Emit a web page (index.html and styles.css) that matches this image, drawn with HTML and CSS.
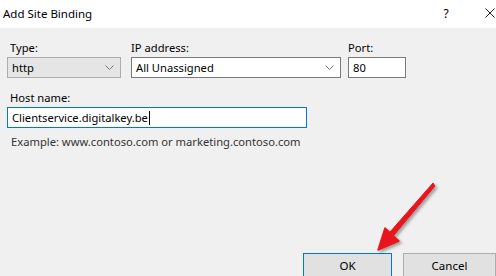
FILE: index.html
```html
<!DOCTYPE html>
<html lang="en">
  <head>
    <meta charset="UTF-8" />
    <title>Add Site Binding</title>
    <link rel="stylesheet" href="styles.css">
  </head>
  <body>
    <div class="dialog">
      <div class="titlebar">
        <span class="title">Add Site Binding</span>
        <span class="help">?</span>
        <svg class="close" width="10" height="10" viewBox="0 0 10 10"><path d="M0.5 0.5 L9.5 9.5 M9.5 0.5 L0.5 9.5" stroke="#222" stroke-width="1" fill="none"/></svg>
      </div>

      <div class="content">
        <div class="row">
          <div class="field type">
            <label class="lbl lbl-type">Type:</label>
            <div class="combo combo-ro">
              <span>http</span>
              <svg class="chev" width="9" height="5" viewBox="0 0 9 5"><path d="M0.5 0.5 L4.5 4.5 L8.5 0.5" fill="none" stroke="#777" stroke-width="1"/></svg>
            </div>
          </div>
          <div class="field ip">
            <label class="lbl">IP address:</label>
            <div class="combo combo-edit">
              <span>All Unassigned</span>
              <svg class="chev" width="9" height="5" viewBox="0 0 9 5"><path d="M0.5 0.5 L4.5 4.5 L8.5 0.5" fill="none" stroke="#777" stroke-width="1"/></svg>
            </div>
          </div>
          <div class="field port">
            <label class="lbl">Port:</label>
            <div class="textbox">80</div>
          </div>
        </div>

        <label class="lbl lbl-host">Host name:</label>
        <div class="textbox host focused">Clientservice.digitalkey.be<span class="caret"></span></div>
        <p class="hint">Example: www.contoso.com or marketing.contoso.com</p>
      </div>

      <div class="footer">
        <button class="btn default">OK</button>
        <button class="btn cancel">Cancel</button>
      </div>

      <svg class="arrow" width="496" height="276" viewBox="0 0 496 276">
        <defs>
          <filter id="shadow" x="-20%" y="-20%" width="140%" height="140%">
            <feDropShadow dx="2" dy="2" stdDeviation="1.5" flood-color="#000" flood-opacity="0.35"/>
          </filter>
        </defs>
        <g filter="url(#shadow)" fill="#e8141b" stroke="#e8141b" stroke-linejoin="round">
          <path d="M433 183 L435 186 L394 235 L390 232 Z" stroke-width="1"/>
          <path d="M378 250 L385 228 L399 241 Z" stroke-width="1.5"/>
        </g>
      </svg>
    </div>
  </body>
</html>
```

FILE: styles.css
```css
body {
  margin: 0;
  font-family: "Noto Sans", "Open Sans", sans-serif;
  font-size: 11.2px;
  color: #000;
  background-color: #f0f0f0;
  overflow: hidden;
}
.dialog {
  position: relative;
  width: 496px;
  height: 276px;
  display: flex;
  flex-direction: column;
  overflow: hidden;
}
.titlebar {
  height: 28px;
  background-color: #fff;
  display: flex;
  align-items: center;
  padding-left: 3px;
}
.title {
  flex: 1;
  margin-top: -2px;
  font-size: 11.5px;
}
.help {
  width: 10px;
  text-align: center;
  margin-right: 34px;
  margin-top: -2px;
  font-size: 12px;
}
.close {
  margin-right: 1px;
  margin-top: -2px;
}
.content {
  padding: 11px 0 0 7px;
}
.row {
  display: flex;
}
.field {
  display: flex;
  flex-direction: column;
}
.type {
  width: 114px;
  margin-right: 10px;
}
.ip {
  width: 210px;
  margin-right: 7px;
}
.port {
  width: 58px;
}
.lbl {
  display: block;
  height: 17px;
  line-height: 17px;
  margin-bottom: 1px;
}
.lbl-type {
  padding-left: 3px;
}
.lbl-host {
  margin-top: 11px;
  padding-left: 3px;
}
.combo,
.textbox {
  box-sizing: border-box;
  height: 21px;
  display: flex;
  align-items: center;
  padding-left: 4px;
}
.combo span {
  flex: 1;
}
.combo-ro {
  background-color: #e5e5e5;
  border: 1px solid #adadad;
}
.combo-edit {
  background-color: #fff;
  border: 1px solid #7a7a7a;
}
.chev {
  margin-right: 6px;
}
.textbox {
  background-color: #fff;
  border: 1px solid #7a7a7a;
}
.host {
  width: 300px;
  height: 21px;
}
.focused {
  border-color: #0078d7;
}
.caret {
  display: inline-block;
  width: 1px;
  height: 14px;
  background-color: #000;
  margin-left: 1px;
}
.hint {
  margin: 6px 0 0 4px;
  color: #333;
}
.footer {
  margin-top: auto;
  margin-bottom: -2px;
  display: flex;
  padding-left: 303px;
  gap: 11px;
}
.btn {
  box-sizing: border-box;
  width: 89px;
  height: 25px;
  font-family: inherit;
  font-size: 11.5px;
  color: #000;
  background-color: #e1e1e1;
  border: 1px solid #adadad;
  padding: 0;
}
.default {
  border-color: #0078d7;
}
.cancel {
  width: 93px;
}
.arrow {
  position: absolute;
  top: 0;
  left: 0;
  pointer-events: none;
}
```
